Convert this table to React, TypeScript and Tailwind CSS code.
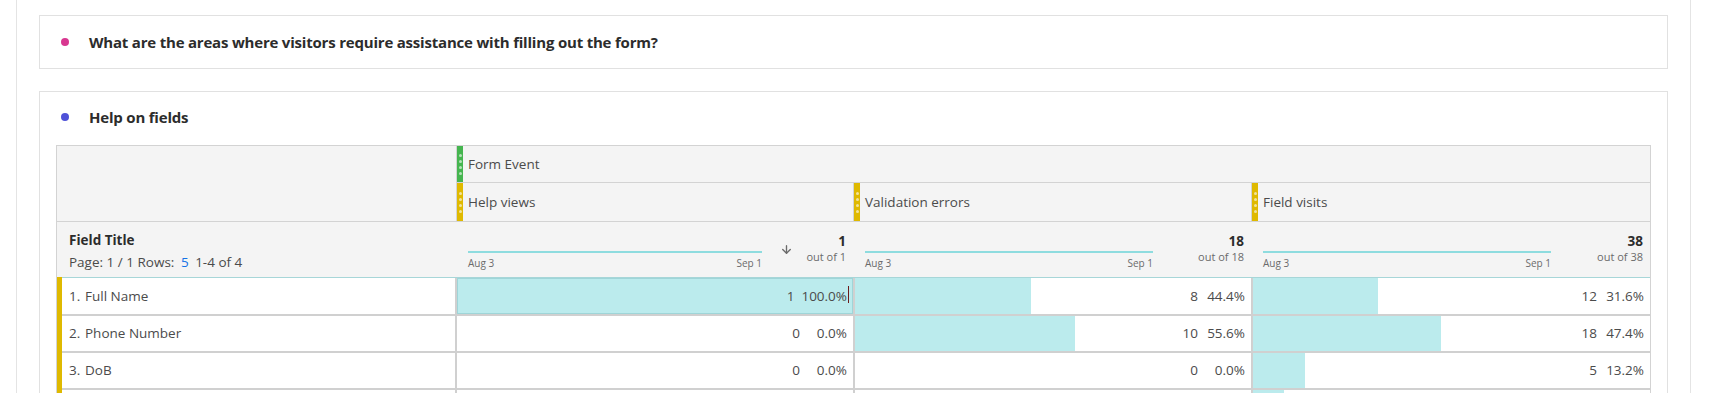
import React from 'react';
import { ArrowDown } from 'lucide-react';

type Cell = { n: number; pct: string; w: number };

const metrics = [
  { label: 'Help views', total: 1, spark: 'w-[294px]', arrow: true, width: 'w-[397px]' },
  { label: 'Validation errors', total: 18, spark: 'w-[288px]', arrow: false, width: 'w-[398px]' },
  { label: 'Field visits', total: 38, spark: 'w-[288px]', arrow: false, width: 'flex-1' },
];

const rows: { name: string; cells: Cell[] }[] = [
  { name: 'Full Name', cells: [{ n: 1, pct: '100.0%', w: 100 }, { n: 8, pct: '44.4%', w: 44.4 }, { n: 12, pct: '31.6%', w: 31.6 }] },
  { name: 'Phone Number', cells: [{ n: 0, pct: '0.0%', w: 0 }, { n: 10, pct: '55.6%', w: 55.6 }, { n: 18, pct: '47.4%', w: 47.4 }] },
  { name: 'DoB', cells: [{ n: 0, pct: '0.0%', w: 0 }, { n: 0, pct: '0.0%', w: 0 }, { n: 5, pct: '13.2%', w: 13.2 }] },
  { name: 'Email', cells: [{ n: 0, pct: '0.0%', w: 0 }, { n: 0, pct: '0.0%', w: 0 }, { n: 3, pct: '7.9%', w: 7.9 }] },
];

// drag handle strip with the little dots
const Grip: React.FC<{ color: string }> = ({ color }) => (
  <div className={`w-[6px] self-stretch flex flex-col items-center justify-center gap-[3px] ${color}`}>
    <span className="w-[3px] h-[3px] rounded-full bg-white/60" />
    <span className="w-[3px] h-[3px] rounded-full bg-white/60" />
    <span className="w-[3px] h-[3px] rounded-full bg-white/60" />
    <span className="w-[3px] h-[3px] rounded-full bg-white/60" />
  </div>
);

const App: React.FC = () => {
  return (
    <div className="w-[1713px] h-[393px] overflow-hidden bg-white pl-[16px] font-['Open_Sans','Noto_Sans',sans-serif] text-[#4b4b4b]">
      <div className="w-[1675px] h-full border-x border-[#e4e4e4] pl-[22px] pr-[22px] pt-[15px]">
        {/* Question card */}
        <div className="h-[54px] border border-[#e1e1e1] flex items-center pl-[21px]">
          <span className="w-[8px] h-[8px] rounded-full bg-[#d83790]" />
          <span className="ml-[20px] text-[15px] font-bold text-[#2c2c2c] tracking-[-0.2px]">
            What are the areas where visitors require assistance with filling out the form?
          </span>
        </div>

        {/* Help on fields card */}
        <div className="mt-[22px] border border-[#e1e1e1] px-[16px] h-[320px]">
          <div className="h-[53px] flex items-center pb-[3px] pl-[5px]">
            <span className="w-[8px] h-[8px] rounded-full bg-[#4f52d8]" />
            <span className="ml-[20px] text-[15px] font-bold text-[#2c2c2c] tracking-[-0.2px]">Help on fields</span>
          </div>

          <div className="border border-[#d3d3d3] text-[13.5px]">
            {/* header rows */}
            <div className="flex bg-[#f4f4f4] border-b border-[#d3d3d3]">
              <div className="w-[399px]" />
              <div className="flex-1 flex flex-col border-l border-[#d3d3d3]">
                <div className="h-[37px] flex items-center border-b border-[#d3d3d3]">
                  <Grip color="bg-[#45b54f]" />
                  <span className="pl-[5px]">Form Event</span>
                </div>
                <div className="h-[38px] flex">
                  {metrics.map((m, i) => (
                    <div
                      key={m.label}
                      className={`${i === 0 ? 'w-[396px]' : m.width} flex items-center ${i > 0 ? 'border-l border-[#d3d3d3]' : ''}`}
                    >
                      <Grip color="bg-[#dfb900]" />
                      <span className="pl-[5px]">{m.label}</span>
                    </div>
                  ))}
                </div>
              </div>
            </div>

            {/* Field title row */}
            <div className="flex bg-[#f4f4f4] h-[55px]">
              <div className="w-[399px] pl-[12px] pt-[10px] leading-[16px]">
                <div className="font-bold text-[#2c2c2c]">Field Title</div>
                <div className="mt-[6px]">
                  Page: 1 / 1 Rows: <span className="text-[#1473e6] mx-[3px]">5</span> 1-4 of 4
                </div>
              </div>
              {metrics.map((m) => (
                <div key={m.label} className={`${m.width} flex pl-[12px] pr-[7px]`}>
                  <div className={`${m.spark} pt-[29px]`}>
                    <div className="h-[2px] bg-[#8edcdf]" />
                    <div className="mt-[4px] flex justify-between text-[10px] leading-[12px] text-[#6b6b6b]">
                      <span>Aug 3</span>
                      <span>Sep 1</span>
                    </div>
                  </div>
                  {m.arrow && (
                    <div className="ml-[18px] mt-[21px]">
                      <ArrowDown size={13} strokeWidth={2.5} className="text-[#6b6b6b]" />
                    </div>
                  )}
                  <div className="flex-1 text-right pt-[11px]">
                    <div className="font-bold text-[#2c2c2c] leading-[16px]">{m.total}</div>
                    <div className="text-[11px] leading-[14px] mt-[1px] text-[#6b6b6b]">out of {m.total}</div>
                  </div>
                </div>
              ))}
            </div>

            {/* data rows */}
            <div className="flex">
              <div className="w-[5px] bg-[#dfb900]" />
              <div className="flex-1">
                {rows.map((r, ri) => (
                  <div key={r.name} className="flex h-[37px] border-t-2 first:border-t first:border-t-[#a7d6d8] border-[#d0d0d0] bg-white">
                    <div className="w-[393px] flex items-center pl-[7px]">
                      <span className="w-[16px]">{ri + 1}.</span>
                      <span>{r.name}</span>
                    </div>
                    {r.cells.map((c, ci) => (
                      <div
                        key={ci}
                        className={`relative ${ci === 2 ? 'flex-1' : 'w-[398px]'} border-l-2 border-[#d0d0d0] flex items-center justify-end pr-[6px]`}
                      >
                        {c.w > 0 && (
                          <div
                            className={`absolute inset-y-0 left-0 bg-[#bbebed] ${c.w === 100 ? 'border border-[#9fd5d8]' : ''}`}
                            style={{ width: `${c.w}%` }}
                          />
                        )}
                        <span className="relative mr-[7px]">{c.n}</span>
                        <span className="relative min-w-[40px] text-right">{c.pct}</span>
                        {ri === 0 && ci === 0 && (
                          <span className="absolute right-[4px] top-[8px] w-px h-[17px] bg-[#6d1a1a]" />
                        )}
                      </div>
                    ))}
                  </div>
                ))}
              </div>
            </div>
          </div>
        </div>
      </div>
    </div>
  );
};

export default App;
